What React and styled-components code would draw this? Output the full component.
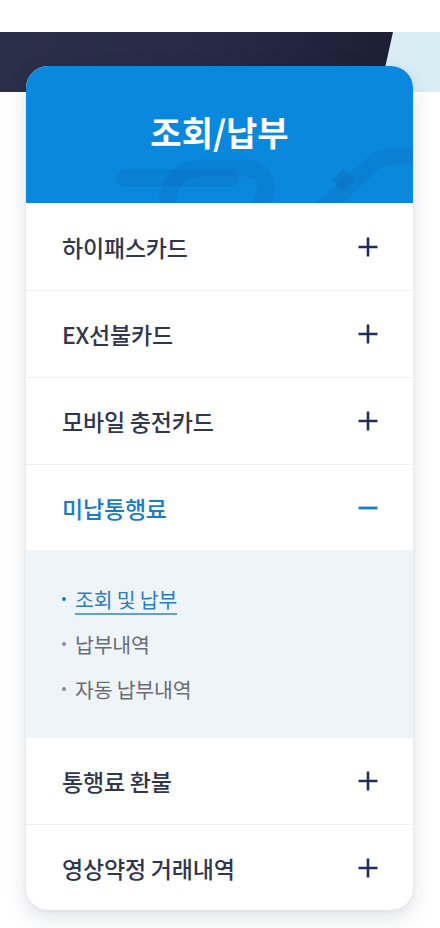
import React from "react";
import styled, { createGlobalStyle } from "styled-components";

const Global = createGlobalStyle`
  html, body { margin: 0; padding: 0; background: #ffffff; }
  body { font-family: "Noto Sans CJK KR", "Noto Sans", sans-serif; -webkit-font-smoothing: antialiased; }
  * { box-sizing: border-box; }
`;

const Page = styled.div`
  width: 440px;
  min-height: 928px;
  padding-top: 32px;
  background: #ffffff;
  overflow: hidden;
`;

const Band = styled.div`
  height: 60px;
  display: flex;
  background: linear-gradient(90deg, #e6f1f6 0%, #d9edf4 100%);
`;

const DarkSlant = styled.div`
  width: 393px;
  height: 100%;
  background: linear-gradient(90deg, #2b3049 0%, #262a44 55%, #1c1f35 100%);
  clip-path: polygon(0 0, 100% 0, 96.6% 100%, 0 100%);
`;

const Card = styled.section`
  margin: -26px 27px 18px 26px;
  border-radius: 22px;
  background: #ffffff;
  box-shadow: 0 8px 22px rgba(20, 30, 60, 0.13), 0 1px 4px rgba(20, 30, 60, 0.06);
  overflow: hidden;
  position: relative;
`;

const Header = styled.header`
  position: relative;
  height: 137px;
  background: #0a88dd;
  display: flex;
  align-items: center;
  justify-content: center;
  overflow: hidden;
`;

const Deco = styled.svg`
  position: absolute;
  left: 0;
  top: 0;
  width: 387px;
  height: 137px;
`;

const Title = styled.h1`
  position: relative;
  margin: 0;
  padding-bottom: 6px;
  color: #ffffff;
  font-size: 34px;
  font-weight: 700;
  letter-spacing: 0;
`;

const Row = styled.div`
  height: ${(p) => p.$h || 87}px;
  border-top: 1px solid #eff0f2;
  display: flex;
  align-items: center;
  justify-content: space-between;
  padding: 0 34px 0 36px;
  &:first-of-type { border-top: none; }
`;

const Label = styled.span`
  font-size: 23px;
  font-weight: 500;
  letter-spacing: -0.2px;
  color: ${(p) => (p.$active ? "#1a7cc9" : "#30364f")};
`;

const Toggle = styled.svg`
  width: 22px;
  height: 22px;
  flex: none;
`;

const Sub = styled.ul`
  list-style: none;
  margin: 0;
  padding: 26px 0 26px 36px;
  background: #eef4f8;
`;

const SubItem = styled.li`
  height: 45px;
  display: flex;
  align-items: center;
  gap: 9px;
`;

const Dot = styled.span`
  width: 4px;
  height: 4px;
  border-radius: 50%;
  background: ${(p) => (p.$active ? "#1a7cc9" : "#8a8d94")};
  flex: none;
`;

const SubText = styled.span`
  display: inline-block;
  font-size: 20.5px;
  line-height: 26px;
  letter-spacing: -0.2px;
  color: ${(p) => (p.$active ? "#2a7ec4" : "#6a6d74")};
  padding-bottom: ${(p) => (p.$active ? "1px" : "0")};
  border-bottom: ${(p) => (p.$active ? "2px solid #5aa2d8" : "none")};
  margin-top: ${(p) => (p.$active ? "3px" : "0")};
`;

const Plus = () => (
  <Toggle viewBox="0 0 22 22">
    <path d="M11 1.5v19M1.5 11h19" stroke="#232a5c" strokeWidth="2.6" strokeLinecap="butt" fill="none" />
  </Toggle>
);

const Minus = () => (
  <Toggle viewBox="0 0 22 22">
    <path d="M1.5 11h19" stroke="#1a7cc9" strokeWidth="2.8" fill="none" />
  </Toggle>
);

const menu = [
  { label: "하이패스카드" },
  { label: "EX선불카드" },
  { label: "모바일 충전카드" },
  { label: "미납통행료", open: true, sub: ["조회 및 납부", "납부내역", "자동 납부내역"] },
  { label: "통행료 환불" },
  { label: "영상약정 거래내역", h: 86 },
];

export default function App() {
  return (
    <Page>
      <Global />
      <Band>
        <DarkSlant />
      </Band>
      <Card>
        <Header>
          <Deco viewBox="0 0 387 137">
            <g fill="none" stroke="#0b5aa6" strokeOpacity="0.16" strokeWidth="17" strokeLinecap="round" strokeLinejoin="round">
              <path d="M98 112 H205" />
              <path d="M140 150 C140 120 150 102 178 102 H218 C238 102 246 118 236 136" />
              <path d="M288 150 L340 104 C350 94 358 90 372 90 H400" />
            </g>
            <rect x="309" y="106" width="16" height="16" transform="rotate(45 317 114)" fill="#0b5aa6" fillOpacity="0.25" />
          </Deco>
          <Title>조회/납부</Title>
        </Header>
        {menu.map((m) => (
          <React.Fragment key={m.label}>
            <Row $h={m.open ? 86 : m.h}>
              <Label $active={m.open}>{m.label}</Label>
              {m.open ? <Minus /> : <Plus />}
            </Row>
            {m.open && (
              <Sub>
                {m.sub.map((s, i) => (
                  <SubItem key={s}>
                    <Dot $active={i === 0} />
                    <SubText $active={i === 0}>{s}</SubText>
                  </SubItem>
                ))}
              </Sub>
            )}
          </React.Fragment>
        ))}
      </Card>
    </Page>
  );
}
